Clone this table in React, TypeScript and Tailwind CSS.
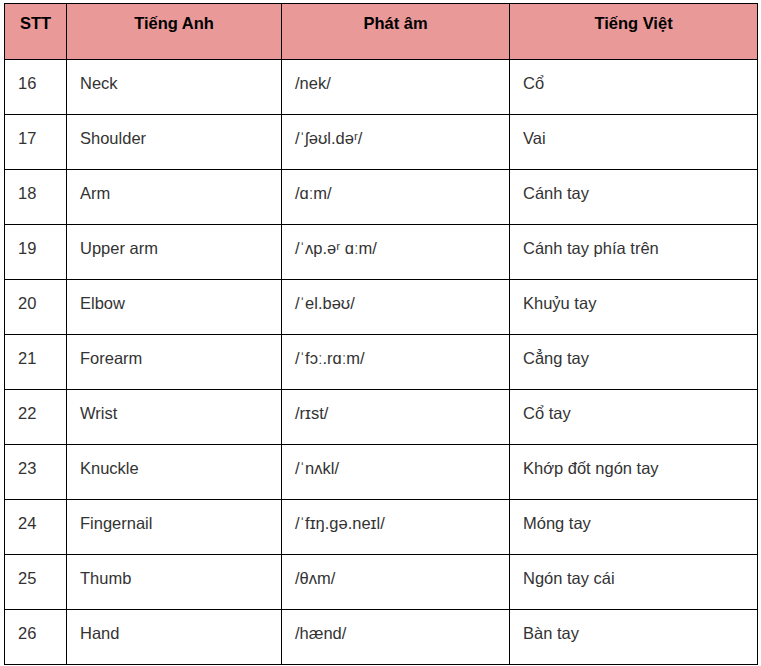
const ROWS = [
  { stt: 16, en: 'Neck', ipa: '/nek/', vi: 'Cổ' },
  { stt: 17, en: 'Shoulder', ipa: '/ˈʃəʊl.dəʳ/', vi: 'Vai' },
  { stt: 18, en: 'Arm', ipa: '/ɑːm/', vi: 'Cánh tay' },
  { stt: 19, en: 'Upper arm', ipa: '/ˈʌp.əʳ ɑːm/', vi: 'Cánh tay phía trên' },
  { stt: 20, en: 'Elbow', ipa: '/ˈel.bəʊ/', vi: 'Khuỷu tay' },
  { stt: 21, en: 'Forearm', ipa: '/ˈfɔː.rɑːm/', vi: 'Cẳng tay' },
  { stt: 22, en: 'Wrist', ipa: '/rɪst/', vi: 'Cổ tay' },
  { stt: 23, en: 'Knuckle', ipa: '/ˈnʌkl/', vi: 'Khớp đốt ngón tay' },
  { stt: 24, en: 'Fingernail', ipa: '/ˈfɪŋ.gə.neɪl/', vi: 'Móng tay' },
  { stt: 25, en: 'Thumb', ipa: '/θʌm/', vi: 'Ngón tay cái' },
  { stt: 26, en: 'Hand', ipa: '/hænd/', vi: 'Bàn tay' },
];

export default function App() {
  return (
    <div className="min-h-[666px] bg-white pt-[3px] pl-[4px] font-['Liberation_Sans',Arial,sans-serif]">
      <table className="w-[753px] table-fixed border-collapse text-[16.5px] leading-[18px]">
        <colgroup>
          <col className="w-[62px]" />
          <col className="w-[215px]" />
          <col className="w-[228px]" />
          <col className="w-[248px]" />
        </colgroup>
        <thead>
          <tr className="bg-[#ea9999] text-black">
            {['STT', 'Tiếng Anh', 'Phát âm', 'Tiếng Việt'].map((h) => (
              <th key={h} className="h-[56px] border border-black px-[13px] pt-[10px] align-top text-center font-bold">
                {h}
              </th>
            ))}
          </tr>
        </thead>
        <tbody className="text-[#333]">
          {ROWS.map((r) => (
            <tr key={r.stt}>
              <td className="h-[55px] border border-black px-[13px] pt-[14px] align-top">{r.stt}</td>
              <td className="border border-black px-[13px] pt-[14px] align-top">{r.en}</td>
              <td className="border border-black px-[13px] pt-[14px] align-top">{r.ipa}</td>
              <td className="border border-black px-[13px] pt-[14px] align-top">{r.vi}</td>
            </tr>
          ))}
        </tbody>
      </table>
    </div>
  );
}
